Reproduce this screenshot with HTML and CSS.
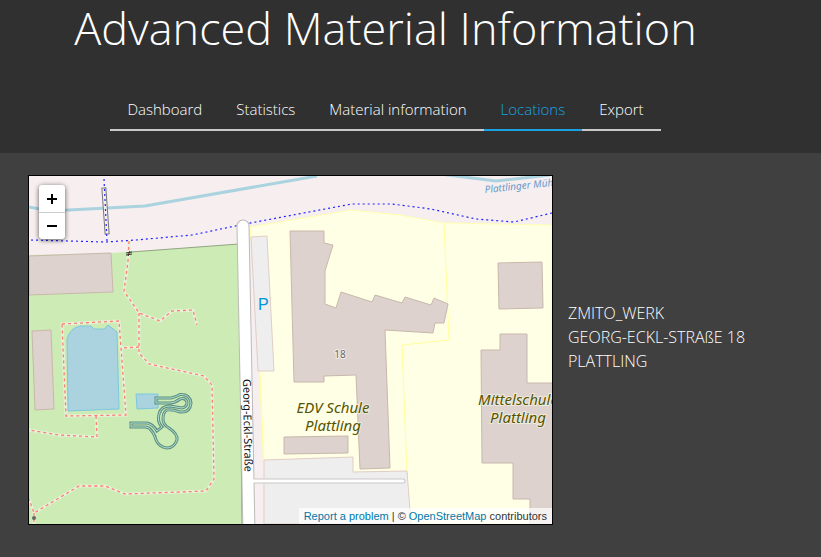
FILE: index.html
```html
<!DOCTYPE html>
<html lang="en">
<head>
<meta charset="utf-8">
<title>Advanced Material Information</title>
<meta name="viewport" content="width=device-width, initial-scale=1">
<link rel="stylesheet" href="styles.css">
</head>
<body>
<header class="header">
  <h1 class="title">Advanced Material Information</h1>
  <nav class="tabs">
    <a class="tab" href="#dashboard">Dashboard</a>
    <a class="tab" href="#statistics">Statistics</a>
    <a class="tab" href="#material">Material information</a>
    <a class="tab tab-active" href="#locations" aria-current="page">Locations</a>
    <a class="tab" href="#export">Export</a>
  </nav>
</header>
<main class="content">
  <section class="map" aria-label="Map">
    <svg class="map-canvas" viewBox="29 176 523 348" preserveAspectRatio="xMidYMid slice">
      <rect class="land" x="29" y="176" width="523" height="348"/>
      <!-- park and school grounds -->
      <path class="park" d="M29 255L112 253L239 244L242 524H29Z"/>
      <path class="park-edge" d="M131 252L239 244L242 524"/>
      <path class="school" d="M250 227L351 210L400 215L444 223L552 225V524H266L257 310Z"/>
      <path class="school-line" d="M444 223L449 340L402 345L408 500L411 524M257 310L264 461"/>
      <path class="parking" d="M251 237L267 236L274 371H258Z"/>
      <path class="parking" d="M264 460L353 457V472L407 471L411 524H264Z"/>
      <!-- river and stream -->
      <path class="river" d="M29 207L50 211L145 206L317 176M440 174L496 181L550 175"/>
      <!-- buildings -->
      <path class="building" d="M29 256L111 253L113 292L29 295Z"/>
      <path class="building" d="M32 331L51 330L54 409L35 410Z"/>
      <path class="building" d="M290 231L324 231V243L333 245L325 271V304L336 308L341 292L372 302L375 295L402 303L405 297L431 305L434 298L448 304L444 323H435L433 333L385 330L390 468L360 469L356 375L324 376V382L294 382Z"/>
      <path class="building" d="M284 437L348 436V453L284 454Z"/>
      <path class="building" d="M498 263L542 262L543 308L499 309Z"/>
      <path class="building" d="M500 334H527V383H553V525H530V499H513V463H482L481 350H500Z"/>
      <!-- pools and slide -->
      <path class="water" d="M67 339Q70 328 80 326H91L94 329H104L108 325L117 332L119 409L68 411Z"/>
      <path class="water" d="M136 394H158V408L137 409Z"/>
      <path class="slide-wall" d="M156 398H171Q176 397 180 394.500Q190 394 191 403Q190 413 180 412Q172 409 167 410Q163 412 163 419Q163 425 169 428Q178 434 177 440Q174 448 167 448Q159 447 156 440Q154 432 149 428L146 427H131V423H147Q153 424 157 431L162 427Q157 422 159 414Q161 406 170 406Q176 407 182 408Q187 407 187 402Q185 397 180 399Q175 403 170 403H156Z"/>
      <path class="slide-core" d="M156 398H171Q176 397 180 394.500Q190 394 191 403Q190 413 180 412Q172 409 167 410Q163 412 163 419Q163 425 169 428Q178 434 177 440Q174 448 167 448Q159 447 156 440Q154 432 149 428L146 427H131V423H147Q153 424 157 431L162 427Q157 422 159 414Q161 406 170 406Q176 407 182 408Q187 407 187 402Q185 397 180 399Q175 403 170 403H156Z"/>
      <!-- footpaths: pale casing under a dashed line -->
      <path class="path-case" d="M129 241L128 261L124 291L139 313L160 321L172 311L193 310L197 325M139 313V353L149 364L204 376L212 385L214 479L206 491L125 494L105 486H79L34 513L29 499M139 347L121 348M62 324L119 321L126 415L66 416ZM96 416L97 437L59 435L29 430M34 513V524"/>
      <path class="path" d="M129 241L128 261L124 291L139 313L160 321L172 311L193 310L197 325M139 313V353L149 364L204 376L212 385L214 479L206 491L125 494L105 486H79L34 513L29 499M139 347L121 348M62 324L119 321L126 415L66 416ZM96 416L97 437L59 435L29 430M34 513V524"/>
      <circle class="node" cx="34" cy="518" r="2"/>
      <path class="gate" d="M126 253L132 252M126 255L132 254M128 256L130 251"/>
      <!-- cycle routes -->
      <path class="bridge" d="M104 190L107 232"/>
      <path class="bridge-fill" d="M104 190L107 232"/>
      <path class="cycle" d="M104 179L107 241M31 240L106 242L136 240L192 235L245 224L325 209L352 204H392L431 209L476 219L514 222L552 213"/>
      <!-- roads -->
      <path class="road-case" d="M243 226L249 534"/>
      <path class="lane-case" d="M255 481H403"/>
      <path class="road" d="M243 226L249 534"/>
      <path class="lane" d="M252 481H403"/>
      <!-- labels -->
      <text class="label-water" transform="translate(485 193) rotate(-6)">Plattlinger Mühlbach</text>
      <text class="label-parking" x="258" y="310">P</text>
      <text class="label-number" x="340" y="358">18</text>
      <text class="label-road" transform="translate(243 379) rotate(89)">Georg-Eckl-Straße</text>
      <text class="label-place" x="333" y="413">EDV Schule</text>
      <text class="label-place" x="333" y="431">Plattling</text>
      <text class="label-place" x="518" y="405">Mittelschule</text>
      <text class="label-place" x="518" y="423">Plattling</text>
    </svg>
    <div class="zoom">
      <button class="zoom-button" type="button" aria-label="Zoom in"><svg class="zoom-icon" viewBox="0 0 12 12"><path d="M1 6H11M6 1V11"/></svg></button>
      <button class="zoom-button" type="button" aria-label="Zoom out"><svg class="zoom-icon" viewBox="0 0 12 12"><path d="M1 6H11"/></svg></button>
    </div>
    <div class="attribution"><a href="#report">Report a problem</a> | © <a href="#osm">OpenStreetMap</a> contributors</div>
  </section>
  <address class="address">ZMITO_WERK<br>GEORG-ECKL-STRAßE 18<br>PLATTLING</address>
</main>
</body>
</html>
```
FILE: styles.css
```css
* { box-sizing: border-box; }
body {
  margin: 0;
  min-height: 100vh;
  background: #404040;
  color: #fff;
  font: 300 15px/24px "Open Sans", "Noto Sans", sans-serif;
}
.header {
  display: flex;
  flex-direction: column;
  align-items: center;
  padding: 0 50px 22px 0;
  background: #303030;
}
.title {
  margin: 0;
  font-size: 45px;
  font-weight: 300;
  line-height: 56px;
}
.tabs { display: flex; margin-top: 32px; }
.tab {
  padding: 9px 17px 8px;
  border-bottom: 2px solid #c8c8c8;
  color: #fff;
  text-decoration: none;
}
.tab-active { border-color: #1ba1e2; color: #1ba1e2; }
.content {
  display: flex;
  align-items: center;
  gap: 15px;
  padding: 22px 28px 32px;
}
.map {
  position: relative;
  flex: 0 1 525px;
  border: 1px solid #000;
  overflow: hidden;
}
.map-canvas { display: block; width: 100%; }
.map-canvas path { fill: none; }
.land { fill: #f6eeef; }
.map-canvas .park { fill: #cdebb4; }
.park-edge { stroke: #94a585; }
.map-canvas .school { fill: #ffffe5; }
.school { stroke: #ffffb0; stroke-width: 1; }
.school-line { stroke: #ffff9c; stroke-width: 1; }
.map-canvas .parking { fill: #eee; }
.parking { stroke: #e1cdc5; }
.river { stroke: #aad3df; stroke-width: 3; }
.map-canvas .building { fill: #ded2cf; }
.building { stroke: #c8b8ab; }
.map-canvas .water { fill: #aad3df; }
.water { stroke: #7cc8df; }
.slide-wall { stroke: #5f8f80; stroke-width: 3; }
.slide-core { stroke: #aadfcf; stroke-width: 1; }
.path-case { stroke: #e6f1d6; stroke-width: 3; }
.path { stroke: #fa8072; stroke-width: 1.3; stroke-dasharray: 3 3; }
.node { fill: #666; }
.gate { stroke: #333; }
.bridge { stroke: #777; stroke-width: 5; stroke-linecap: square; }
.bridge-fill { stroke: #f6eeef; stroke-width: 3; stroke-linecap: square; }
.cycle { stroke: #22f; stroke-width: 1.2; stroke-dasharray: 2 3; }
.road-case { stroke: #bcbaba; stroke-width: 13; stroke-linecap: round; }
.road { stroke: #fff; stroke-width: 11; stroke-linecap: round; }
.lane-case { stroke: #c9c5c5; stroke-width: 5; stroke-linecap: round; }
.lane { stroke: #fff; stroke-width: 3; stroke-linecap: round; }
.map-canvas text { font-family: "Noto Sans", sans-serif; font-weight: 400; }
.map-canvas .label-water { fill: #6699cc; font-size: 10px; font-style: italic; }
.map-canvas .label-parking { fill: #0092da; font: 16px "Liberation Sans", sans-serif; }
.label-number {
  fill: #666;
  stroke: #fff;
  stroke-opacity: 0.6;
  stroke-width: 2;
  paint-order: stroke;
  font-size: 10px;
  text-anchor: middle;
}
.label-road { fill: #111; font-size: 11px; }
.label-place {
  fill: #555500;
  stroke: #fffdea;
  stroke-opacity: 0.6;
  stroke-width: 2;
  paint-order: stroke;
  font-size: 15px;
  font-style: italic;
  text-anchor: middle;
}
.zoom {
  position: absolute;
  top: 9px;
  left: 10px;
  width: 26px;
  border-radius: 4px;
  box-shadow: 0 1px 5px rgba(0, 0, 0, 0.65);
  overflow: hidden;
  background: #fff;
}
.zoom-button {
  display: grid;
  place-items: center;
  width: 26px;
  height: 27px;
  padding: 0;
  border: 0;
  background: #fff;
}
.zoom-button + .zoom-button { border-top: 1px solid #ccc; }
.zoom-icon { width: 12px; height: 12px; stroke: #000; stroke-width: 2; }
.attribution {
  position: absolute;
  right: 0;
  bottom: 0;
  padding: 0 5px;
  background: rgba(255, 255, 255, 0.7);
  color: #333;
  font: 11px/16px "Liberation Sans", Arial, sans-serif;
  white-space: nowrap;
}
.attribution a { color: #0078a8; text-decoration: none; }
.address {
  padding-bottom: 26px;
  font-size: 16px;
  font-style: normal;
}
```
